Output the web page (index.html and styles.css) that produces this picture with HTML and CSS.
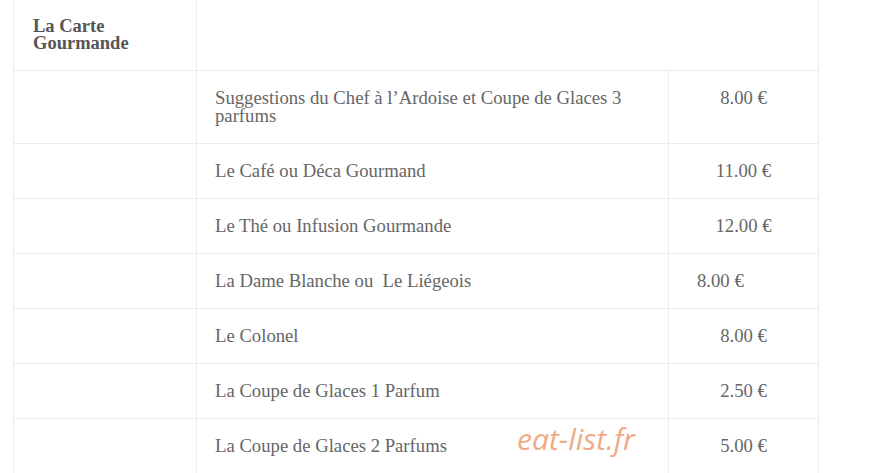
FILE: index.html
```html
<!DOCTYPE html>
<html lang="fr">
<head>
    <meta charset="UTF-8">
    <meta name="viewport" content="width=device-width, initial-scale=1.0">
    <title>La Carte Gourmande</title>
    <link rel="stylesheet" href="styles.css">
</head>
<body>
    <div class="menu">
        <table class="carte">
            <colgroup>
                <col class="col-cat">
                <col class="col-name">
                <col class="col-price">
            </colgroup>
            <tr class="head">
                <th>La Carte Gourmande</th>
                <th colspan="2"></th>
            </tr>
            <tr>
                <td></td>
                <td>Suggestions du Chef à l’Ardoise et Coupe de Glaces 3 parfums</td>
                <td class="price">8.00 €</td>
            </tr>
            <tr>
                <td></td>
                <td>Le Café ou Déca Gourmand</td>
                <td class="price">11.00 €</td>
            </tr>
            <tr>
                <td></td>
                <td>Le Thé ou Infusion Gourmande</td>
                <td class="price">12.00 €</td>
            </tr>
            <tr>
                <td></td>
                <td>La Dame Blanche ou &nbsp;Le Liégeois</td>
                <td class="price price-left">8.00 €</td>
            </tr>
            <tr>
                <td></td>
                <td>Le Colonel</td>
                <td class="price">8.00 €</td>
            </tr>
            <tr>
                <td></td>
                <td>La Coupe de Glaces 1 Parfum</td>
                <td class="price">2.50 €</td>
            </tr>
            <tr>
                <td></td>
                <td>La Coupe de Glaces 2 Parfums</td>
                <td class="price">5.00 €</td>
            </tr>
        </table>
        <span class="watermark">eat-list.fr</span>
    </div>
</body>
</html>
```

FILE: styles.css
```css
body {
    margin: 0;
    padding: 0;
    background-color: #ffffff;
    font-family: "Liberation Serif", "Times New Roman", serif;
    color: #666;
}
.menu {
    position: relative;
    padding-left: 13px;
    margin-top: -1px;
}
.carte {
    border-collapse: collapse;
    width: 805px;
    table-layout: fixed;
}
.col-cat {
    width: 183px;
}
.col-name {
    width: 472px;
}
.col-price {
    width: 150px;
}
.carte th,
.carte td {
    border: 1px solid #ebebeb;
    padding: 18px 17px 18px 18px;
    vertical-align: top;
    text-align: left;
    font-size: 18.7px;
    line-height: 18px;
}
.carte th:first-child {
    padding-left: 19px;
}
.carte .head th {
    font-weight: bold;
    color: #555;
    font-size: 18.5px;
    line-height: 17px;
}
.carte .price {
    text-align: center;
    padding-left: 17px;
}
.carte .price-left {
    text-align: left;
    padding-left: 28px;
}
.watermark {
    position: absolute;
    left: 517px;
    top: 419px;
    font-family: "Open Sans", sans-serif;
    font-style: italic;
    font-size: 30px;
    color: #f0ab86;
}
```
